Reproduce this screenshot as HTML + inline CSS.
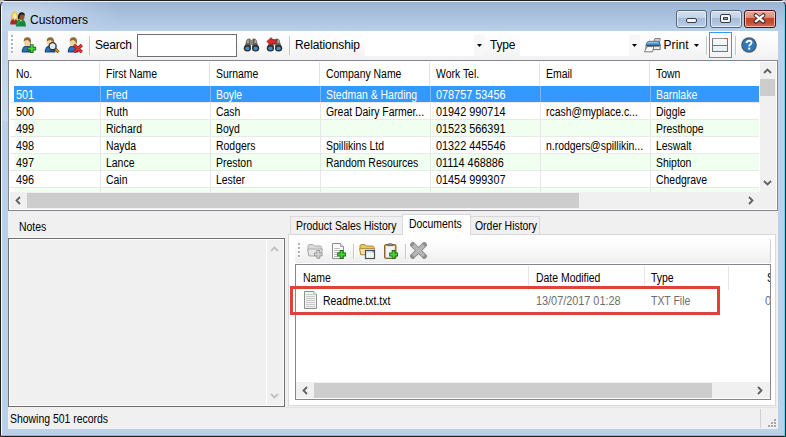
<!DOCTYPE html>
<html><head><meta charset="utf-8"><style>
html,body{margin:0;padding:0;width:786px;height:437px;overflow:hidden;background:#bcbcbc;}
.t{position:absolute;white-space:nowrap;line-height:14px;font-family:"Liberation Sans", sans-serif;}
div{font-family:"Liberation Sans", sans-serif;}
svg{display:block;}
</style></head><body>
<div style="position:relative;width:786px;height:437px;overflow:hidden">
<div style="position:absolute;left:0px;top:0px;width:786px;height:437px;background:#b9d1ea;border-radius:6px 6px 0 0;"></div><div style="position:absolute;left:0px;top:0px;width:786px;height:31px;border-radius:6px 6px 0 0;background:linear-gradient(to bottom,#98b2d2 0px,#a6bedb 12px,#b4cbe6 26px,#b9d1ea 31px);"></div><div style="position:absolute;left:0px;top:0px;width:300px;height:31px;border-radius:6px 0 0 0;background:radial-gradient(ellipse 110px 30px at 10px 14px,rgba(212,226,242,0.8),rgba(212,226,242,0));"></div><div style="position:absolute;left:1px;top:31px;width:7px;height:90px;background:linear-gradient(to bottom,#bfd3ea,#c6d8ee);"></div><div style="position:absolute;left:0px;top:0px;width:786px;height:437px;box-sizing:border-box;border:1px solid #202020;border-radius:6px 6px 0 0;"></div><div style="position:absolute;left:1px;top:1px;width:784px;height:1px;background:#e9f0f8;border-radius:5px 5px 0 0;"></div><div style="position:absolute;left:1px;top:6px;width:1px;height:430px;background:#f4f8fc;"></div><div style="position:absolute;left:784px;top:6px;width:1px;height:430px;background:#5ad8f2;"></div><div style="position:absolute;left:1px;top:435px;width:784px;height:1px;background:#3fd6f2;"></div><div style="position:absolute;left:10px;top:11px"><svg width="16" height="16" viewBox="0 0 16 16">
<path d="M1 9.6 Q0.6 0.5 4.6 0.5 Q8.4 0.5 8.1 9.6 Z" fill="#dcbc3c"/>
<path d="M2.2 7 Q2.2 1.4 4.6 1.4 Q7 1.4 6.9 7Z" fill="#f2dc78"/>
<ellipse cx="4.8" cy="5.6" rx="1.4" ry="2.6" fill="#f4e4b8"/>
<path d="M0.2 13.6 Q0 8.2 4.2 8.2 Q8.2 8.2 8.1 13.6 Z" fill="#a42c1e"/>
<path d="M3.6 8.3 L4.5 9.8 L5.5 8.3Z" fill="#f0e0c0"/>
<path d="M5.8 15.4 Q5.6 8.4 10.8 8.3 Q16 8.4 15.9 15.4 Z" fill="#16873a"/>
<path d="M7.5 14 Q8 10 11 9.6" stroke="#40b060" stroke-width="0.8" fill="none"/>
<path d="M9.6 8.4 L11 10.4 L12.4 8.4Z" fill="#e6f0e6"/>
<ellipse cx="11.8" cy="5.8" rx="2.7" ry="3.4" fill="#8a5230"/>
<path d="M8 8 Q7.6 1.3 11.6 1.3 Q15.1 1.3 14.9 5 Q13.4 3.2 11.2 3.6 Q9.6 4.2 9.4 8.4 Z" fill="#1c1c1c"/>
</svg></div><div class="t" style="left:30px;top:13.14px;font-size:12px;color:#000;letter-spacing:0px;">Customers</div><div style="position:absolute;left:676px;top:10px;width:31px;height:18px;box-sizing:border-box;border:1px solid #56667c;border-radius:3px;background:linear-gradient(to bottom,#d0deee 0%,#c4d5ea 40%,#a6bcd8 45%,#aec3dd 70%,#bdd0e6 100%);box-shadow:inset 0 0 0 1px rgba(255,255,255,0.6);"></div><div style="position:absolute;left:686px;top:18px;width:11px;height:5px;box-sizing:border-box;border:1px solid #363c46;background:#f6f6f6;border-radius:2px;"></div><div style="position:absolute;left:710px;top:10px;width:32px;height:18px;box-sizing:border-box;border:1px solid #56667c;border-radius:3px;background:linear-gradient(to bottom,#d0deee 0%,#c4d5ea 40%,#a6bcd8 45%,#aec3dd 70%,#bdd0e6 100%);box-shadow:inset 0 0 0 1px rgba(255,255,255,0.6);"></div><div style="position:absolute;left:720px;top:14px;width:11px;height:9px;box-sizing:border-box;border:1px solid #363c46;background:#f6f6f6;border-radius:2px;"></div><div style="position:absolute;left:723px;top:17px;width:5px;height:3px;box-sizing:border-box;border:1px solid #404650;background:#8ea4c2;"></div><div style="position:absolute;left:744px;top:10px;width:32px;height:18px;box-sizing:border-box;border:1px solid #4a1212;border-radius:3px;background:linear-gradient(to bottom,#eaa898 0%,#e0907c 40%,#c4462c 45%,#c44a30 70%,#d26c52 100%);box-shadow:inset 0 0 0 1px rgba(255,220,210,0.7);"></div><svg style="position:absolute;left:753px;top:13px" width="13" height="11" viewBox="0 0 13 11"><path d="M2.6 2.2 L10.4 8.6 M10.4 2.2 L2.6 8.6" stroke="#3a2a30" stroke-width="4" stroke-linecap="round"/><path d="M2.8 2.4 L10.2 8.4 M10.2 2.4 L2.8 8.4" stroke="#fbfbfb" stroke-width="2.3" stroke-linecap="round"/></svg><div style="position:absolute;left:8px;top:31px;width:770px;height:398px;background:#f0f0f0;"></div><div style="position:absolute;left:8px;top:31px;width:770px;height:29px;background:linear-gradient(to bottom,#ffffff 0%,#fbfbfc 40%,#f1f1f1 100%);"></div><div style="position:absolute;left:12px;top:36px;width:2px;height:2px;background:#fff;"></div><div style="position:absolute;left:11px;top:35px;width:2px;height:2px;background:#b2b2b2;"></div><div style="position:absolute;left:12px;top:40px;width:2px;height:2px;background:#fff;"></div><div style="position:absolute;left:11px;top:39px;width:2px;height:2px;background:#b2b2b2;"></div><div style="position:absolute;left:12px;top:44px;width:2px;height:2px;background:#fff;"></div><div style="position:absolute;left:11px;top:43px;width:2px;height:2px;background:#b2b2b2;"></div><div style="position:absolute;left:12px;top:48px;width:2px;height:2px;background:#fff;"></div><div style="position:absolute;left:11px;top:47px;width:2px;height:2px;background:#b2b2b2;"></div><div style="position:absolute;left:12px;top:52px;width:2px;height:2px;background:#fff;"></div><div style="position:absolute;left:11px;top:51px;width:2px;height:2px;background:#b2b2b2;"></div><div style="position:absolute;left:21px;top:37px"><svg width="16" height="16" viewBox="0 0 16 16">
<path d="M0.8 15.6 Q0.4 8.6 6 8.4 Q11.6 8.6 11.4 15.6 Z" fill="#174c88"/>
<path d="M2 14.5 Q2 9.8 6 9.6 Q9.5 9.8 9.8 13 Z" fill="#2f72b8"/>
<ellipse cx="6.3" cy="4.9" rx="3.5" ry="4.2" fill="#f0d49c"/>
<path d="M2.7 4.6 Q2.5 0.3 6.5 0.3 Q10.3 0.5 10 5 L9.4 7.4 Q9 3.8 6.6 2.9 Q4.2 2.8 2.7 4.6Z" fill="#8c6a3a"/>
<path d="M6.3 11.6h8.8M10.7 7.2v8.8" stroke="#1d6a14" stroke-width="3.8"/><path d="M7.2 11.6h7M10.7 8.1v7" stroke="#46d836" stroke-width="1.9"/></svg></div><div style="position:absolute;left:44px;top:37px"><svg width="16" height="16" viewBox="0 0 16 16">
<path d="M0.8 15.6 Q0.4 8.6 6 8.4 Q11.6 8.6 11.4 15.6 Z" fill="#174c88"/>
<path d="M2 14.5 Q2 9.8 6 9.6 Q9.5 9.8 9.8 13 Z" fill="#2f72b8"/>
<ellipse cx="6.3" cy="4.9" rx="3.5" ry="4.2" fill="#f0d49c"/>
<path d="M2.7 4.6 Q2.5 0.3 6.5 0.3 Q10.3 0.5 10 5 L9.4 7.4 Q9 3.8 6.6 2.9 Q4.2 2.8 2.7 4.6Z" fill="#8c6a3a"/>
<path d="M11 11.6 L14.6 15.2" stroke="#6a4a10" stroke-width="3"/><path d="M11.2 11.8 L14.4 15" stroke="#d0a040" stroke-width="1.6"/><circle cx="8.6" cy="9.2" r="3.5" fill="#dcecf8" stroke="#2c3036" stroke-width="1.3"/></svg></div><div style="position:absolute;left:67px;top:37px"><svg width="16" height="16" viewBox="0 0 16 16">
<path d="M0.8 15.6 Q0.4 8.6 6 8.4 Q11.6 8.6 11.4 15.6 Z" fill="#174c88"/>
<path d="M2 14.5 Q2 9.8 6 9.6 Q9.5 9.8 9.8 13 Z" fill="#2f72b8"/>
<ellipse cx="6.3" cy="4.9" rx="3.5" ry="4.2" fill="#f0d49c"/>
<path d="M2.7 4.6 Q2.5 0.3 6.5 0.3 Q10.3 0.5 10 5 L9.4 7.4 Q9 3.8 6.6 2.9 Q4.2 2.8 2.7 4.6Z" fill="#8c6a3a"/>
<path d="M7 8 L14.8 15.2 M14.8 8 L7 15.2" stroke="#9a1414" stroke-width="3.2"/><path d="M7.2 8.2 L14.6 15 M14.6 8.2 L7.2 15" stroke="#f03030" stroke-width="1.8"/></svg></div><div style="position:absolute;left:89px;top:36px;width:1px;height:19px;background:#c6c6c6;"></div><div style="position:absolute;left:90px;top:36px;width:1px;height:19px;background:#fff;"></div><div class="t" style="left:95px;top:38.14px;font-size:12px;color:#000;letter-spacing:-0.2px;">Search</div><div style="position:absolute;left:137px;top:34px;width:100px;height:23px;box-sizing:border-box;border:1px solid #6e6e6e;background:#fff;"></div><div style="position:absolute;left:243px;top:37px"><svg width="17" height="15" viewBox="0 0 17 15">
<path d="M1.2 11 L3.6 3 Q4.4 1.2 6.4 1.4 Q7.8 1.8 7.8 3.5 L7.9 10 Z" fill="#5c5a52"/>
<path d="M15.8 11 L13.4 3 Q12.6 1.2 10.6 1.4 Q9.2 1.8 9.2 3.5 L9.1 10 Z" fill="#5c5a52"/>
<path d="M3.4 6 L4.8 2.6 L6.2 2.6 L5.8 6.5Z" fill="#a8a49a"/>
<path d="M11 6 L11.8 2.6 L12.8 2.6 L13.8 6.2Z" fill="#a8a49a"/>
<rect x="7" y="3" width="3" height="5" fill="#8a877e"/>
<ellipse cx="4.4" cy="11.2" rx="3.6" ry="3.2" fill="#2c2c28"/><ellipse cx="4.4" cy="11.4" rx="2.2" ry="1.9" fill="#3f8cc6"/>
<ellipse cx="12.6" cy="11.2" rx="3.6" ry="3.2" fill="#2c2c28"/><ellipse cx="12.6" cy="11.4" rx="2.2" ry="1.9" fill="#3f8cc6"/>
</svg></div><div style="position:absolute;left:266px;top:37px"><svg width="17" height="15" viewBox="0 0 17 15">
<path d="M1.2 11 L3.6 3 Q4.4 1.2 6.4 1.4 Q7.8 1.8 7.8 3.5 L7.9 10 Z" fill="#5c5a52"/>
<path d="M15.8 11 L13.4 3 Q12.6 1.2 10.6 1.4 Q9.2 1.8 9.2 3.5 L9.1 10 Z" fill="#5c5a52"/>
<path d="M3.4 6 L4.8 2.6 L6.2 2.6 L5.8 6.5Z" fill="#a8a49a"/>
<path d="M11 6 L11.8 2.6 L12.8 2.6 L13.8 6.2Z" fill="#a8a49a"/>
<rect x="7" y="3" width="3" height="5" fill="#8a877e"/>
<ellipse cx="4.4" cy="11.2" rx="3.6" ry="3.2" fill="#2c2c28"/><ellipse cx="4.4" cy="11.4" rx="2.2" ry="1.9" fill="#3f8cc6"/>
<ellipse cx="12.6" cy="11.2" rx="3.6" ry="3.2" fill="#2c2c28"/><ellipse cx="12.6" cy="11.4" rx="2.2" ry="1.9" fill="#3f8cc6"/>
<path d="M0.8 4.6 L5.2 0.6 L5.4 2.8 L9.6 2.6 L9.8 6.4 L5.6 6.6 L5.8 8.8Z" fill="#e02828" stroke="#901818" stroke-width="0.7"/></svg></div><div style="position:absolute;left:289px;top:36px;width:1px;height:19px;background:#c6c6c6;"></div><div style="position:absolute;left:290px;top:36px;width:1px;height:19px;background:#fff;"></div><div class="t" style="left:295px;top:38.14px;font-size:12px;color:#000;letter-spacing:-0.1px;">Relationship</div><div style="position:absolute;left:365px;top:35px;width:120px;height:21px;background:#fff;"></div><div style="position:absolute;left:474px;top:35px;width:11px;height:21px;background:#f7f7f7;"></div><svg style="position:absolute;left:477px;top:44px" width="6" height="4" viewBox="0 0 6 4"><path d="M0 0H5L2.5 3Z" fill="#000"/></svg><div class="t" style="left:490px;top:38.14px;font-size:12px;color:#000;letter-spacing:-0.2px;">Type</div><div style="position:absolute;left:520px;top:35px;width:120px;height:21px;background:#fff;"></div><div style="position:absolute;left:629px;top:35px;width:11px;height:21px;background:#f7f7f7;"></div><svg style="position:absolute;left:632px;top:44px" width="6" height="4" viewBox="0 0 6 4"><path d="M0 0H5L2.5 3Z" fill="#000"/></svg><div style="position:absolute;left:644px;top:38px"><svg width="17" height="15" viewBox="0 0 17 15">
<path d="M9.4 4.2 L11 0.5 L16.2 0.5 L15.6 4.6Z" fill="#cfcfcf" stroke="#6a6a6a" stroke-width="0.8"/>
<path d="M2 7 L16.2 7 L16.2 11.6 L2 11.6Z" fill="#ececec" stroke="#4e4e4e" stroke-width="0.8"/>
<path d="M2 7.2 Q2.4 3.4 5.2 3.3 L14 3.3 Q16 3.5 16.2 7.2Z" fill="#4b99d9" stroke="#2d5e8e" stroke-width="0.7"/>
<path d="M3.5 5 Q8 3.9 14 4.4" stroke="#a8d4f4" stroke-width="0.9" fill="none"/>
<rect x="3" y="7.2" width="12.5" height="1.3" fill="#3a3a3a"/>
<path d="M3 8.6 L9.8 8.6 L8.6 13.8 L0.5 13.8Z" fill="#fbfbfb" stroke="#5a5a5a" stroke-width="0.8"/>
</svg></div><div class="t" style="left:663.5px;top:38.14px;font-size:12px;color:#000;letter-spacing:0.1px;">Print</div><svg style="position:absolute;left:694px;top:44px" width="6" height="4" viewBox="0 0 6 4"><path d="M0 0H5L2.5 3Z" fill="#000"/></svg><div style="position:absolute;left:706px;top:36px;width:1px;height:19px;background:#c6c6c6;"></div><div style="position:absolute;left:707px;top:36px;width:1px;height:19px;background:#fff;"></div><div style="position:absolute;left:709px;top:32px;width:23px;height:26px;box-sizing:border-box;border:1px solid #3399ff;"></div><div style="position:absolute;left:712px;top:38px;width:16px;height:14px;box-sizing:border-box;border:1px solid #6c7884;border-top-color:#8a949e;background:linear-gradient(to bottom,#f8fafb,#e8eef2);"></div><div style="position:absolute;left:713px;top:45px;width:14px;height:1px;background:#6c7884;"></div><div style="position:absolute;left:725px;top:38px;width:2px;height:1px;background:#f05030;"></div><div style="position:absolute;left:735px;top:36px;width:1px;height:19px;background:#c6c6c6;"></div><div style="position:absolute;left:736px;top:36px;width:1px;height:19px;background:#fff;"></div><div style="position:absolute;left:741px;top:37px"><svg width="16" height="16" viewBox="0 0 16 16">
<circle cx="8" cy="8" r="7.8" fill="#505a64"/>
<circle cx="8" cy="8" r="6.5" fill="#2b78c0"/>
<path d="M3 6 Q8 1 13 6 Q8 4 3 6Z" fill="#8cc0ec"/>
<path d="M5.6 6.1 Q5.8 3.7 8.1 3.7 Q10.5 3.8 10.5 5.8 Q10.4 7.2 8.9 7.9 Q8.2 8.3 8.2 9.6" stroke="#fff" stroke-width="1.8" fill="none"/>
<rect x="7.2" y="10.6" width="2" height="2" fill="#fff"/>
</svg></div><div style="position:absolute;left:8px;top:60px;width:770px;height:151px;box-sizing:border-box;border:1px solid #828790;background:#fff;"></div><div style="position:absolute;left:99px;top:62px;width:1px;height:23px;background:#e3e3e3;"></div><div style="position:absolute;left:209px;top:62px;width:1px;height:23px;background:#e3e3e3;"></div><div style="position:absolute;left:319px;top:62px;width:1px;height:23px;background:#e3e3e3;"></div><div style="position:absolute;left:429px;top:62px;width:1px;height:23px;background:#e3e3e3;"></div><div style="position:absolute;left:539px;top:62px;width:1px;height:23px;background:#e3e3e3;"></div><div style="position:absolute;left:649px;top:62px;width:1px;height:23px;background:#e3e3e3;"></div><div class="t" style="left:16px;top:66.74px;font-size:12px;color:#000;letter-spacing:0px;transform:scaleX(0.87);transform-origin:0 0;">No.</div><div class="t" style="left:106px;top:66.74px;font-size:12px;color:#000;letter-spacing:0px;transform:scaleX(0.87);transform-origin:0 0;">First Name</div><div class="t" style="left:216px;top:66.74px;font-size:12px;color:#000;letter-spacing:0px;transform:scaleX(0.87);transform-origin:0 0;">Surname</div><div class="t" style="left:326px;top:66.74px;font-size:12px;color:#000;letter-spacing:0px;transform:scaleX(0.87);transform-origin:0 0;">Company Name</div><div class="t" style="left:436px;top:66.74px;font-size:12px;color:#000;letter-spacing:0px;transform:scaleX(0.87);transform-origin:0 0;">Work Tel.</div><div class="t" style="left:546px;top:66.74px;font-size:12px;color:#000;letter-spacing:0px;transform:scaleX(0.87);transform-origin:0 0;">Email</div><div class="t" style="left:656px;top:66.74px;font-size:12px;color:#000;letter-spacing:0px;transform:scaleX(0.87);transform-origin:0 0;">Town</div><div style="position:absolute;left:14px;top:86px;width:745px;height:16px;background:#3399ff;"></div><div style="position:absolute;left:10px;top:102px;width:749px;height:1px;background:#e9e9e9;"></div><div style="position:absolute;left:100px;top:86px;width:1px;height:16px;background:#78b8ff;"></div><div style="position:absolute;left:210px;top:86px;width:1px;height:16px;background:#78b8ff;"></div><div style="position:absolute;left:320px;top:86px;width:1px;height:16px;background:#78b8ff;"></div><div style="position:absolute;left:430px;top:86px;width:1px;height:16px;background:#78b8ff;"></div><div style="position:absolute;left:540px;top:86px;width:1px;height:16px;background:#78b8ff;"></div><div style="position:absolute;left:650px;top:86px;width:1px;height:16px;background:#78b8ff;"></div><div style="position:absolute;left:14px;top:103px;width:745px;height:16px;background:#ffffff;"></div><div style="position:absolute;left:10px;top:119px;width:749px;height:1px;background:#e9e9e9;"></div><div style="position:absolute;left:100px;top:103px;width:1px;height:16px;background:#e6e6e6;"></div><div style="position:absolute;left:210px;top:103px;width:1px;height:16px;background:#e6e6e6;"></div><div style="position:absolute;left:320px;top:103px;width:1px;height:16px;background:#e6e6e6;"></div><div style="position:absolute;left:430px;top:103px;width:1px;height:16px;background:#e6e6e6;"></div><div style="position:absolute;left:540px;top:103px;width:1px;height:16px;background:#e6e6e6;"></div><div style="position:absolute;left:650px;top:103px;width:1px;height:16px;background:#e6e6e6;"></div><div style="position:absolute;left:14px;top:120px;width:745px;height:16px;background:#f0fff0;"></div><div style="position:absolute;left:10px;top:136px;width:749px;height:1px;background:#e9e9e9;"></div><div style="position:absolute;left:100px;top:120px;width:1px;height:16px;background:#e6e6e6;"></div><div style="position:absolute;left:210px;top:120px;width:1px;height:16px;background:#e6e6e6;"></div><div style="position:absolute;left:320px;top:120px;width:1px;height:16px;background:#e6e6e6;"></div><div style="position:absolute;left:430px;top:120px;width:1px;height:16px;background:#e6e6e6;"></div><div style="position:absolute;left:540px;top:120px;width:1px;height:16px;background:#e6e6e6;"></div><div style="position:absolute;left:650px;top:120px;width:1px;height:16px;background:#e6e6e6;"></div><div style="position:absolute;left:14px;top:137px;width:745px;height:16px;background:#ffffff;"></div><div style="position:absolute;left:10px;top:153px;width:749px;height:1px;background:#e9e9e9;"></div><div style="position:absolute;left:100px;top:137px;width:1px;height:16px;background:#e6e6e6;"></div><div style="position:absolute;left:210px;top:137px;width:1px;height:16px;background:#e6e6e6;"></div><div style="position:absolute;left:320px;top:137px;width:1px;height:16px;background:#e6e6e6;"></div><div style="position:absolute;left:430px;top:137px;width:1px;height:16px;background:#e6e6e6;"></div><div style="position:absolute;left:540px;top:137px;width:1px;height:16px;background:#e6e6e6;"></div><div style="position:absolute;left:650px;top:137px;width:1px;height:16px;background:#e6e6e6;"></div><div style="position:absolute;left:14px;top:154px;width:745px;height:16px;background:#f0fff0;"></div><div style="position:absolute;left:10px;top:170px;width:749px;height:1px;background:#e9e9e9;"></div><div style="position:absolute;left:100px;top:154px;width:1px;height:16px;background:#e6e6e6;"></div><div style="position:absolute;left:210px;top:154px;width:1px;height:16px;background:#e6e6e6;"></div><div style="position:absolute;left:320px;top:154px;width:1px;height:16px;background:#e6e6e6;"></div><div style="position:absolute;left:430px;top:154px;width:1px;height:16px;background:#e6e6e6;"></div><div style="position:absolute;left:540px;top:154px;width:1px;height:16px;background:#e6e6e6;"></div><div style="position:absolute;left:650px;top:154px;width:1px;height:16px;background:#e6e6e6;"></div><div style="position:absolute;left:14px;top:171px;width:745px;height:16px;background:#ffffff;"></div><div style="position:absolute;left:10px;top:187px;width:749px;height:1px;background:#e9e9e9;"></div><div style="position:absolute;left:100px;top:171px;width:1px;height:16px;background:#e6e6e6;"></div><div style="position:absolute;left:210px;top:171px;width:1px;height:16px;background:#e6e6e6;"></div><div style="position:absolute;left:320px;top:171px;width:1px;height:16px;background:#e6e6e6;"></div><div style="position:absolute;left:430px;top:171px;width:1px;height:16px;background:#e6e6e6;"></div><div style="position:absolute;left:540px;top:171px;width:1px;height:16px;background:#e6e6e6;"></div><div style="position:absolute;left:650px;top:171px;width:1px;height:16px;background:#e6e6e6;"></div><div style="position:absolute;left:14px;top:188px;width:745px;height:4px;background:#f0fff0;"></div><div style="position:absolute;left:100px;top:188px;width:1px;height:4px;background:#e6e6e6;"></div><div style="position:absolute;left:210px;top:188px;width:1px;height:4px;background:#e6e6e6;"></div><div style="position:absolute;left:320px;top:188px;width:1px;height:4px;background:#e6e6e6;"></div><div style="position:absolute;left:430px;top:188px;width:1px;height:4px;background:#e6e6e6;"></div><div style="position:absolute;left:540px;top:188px;width:1px;height:4px;background:#e6e6e6;"></div><div style="position:absolute;left:650px;top:188px;width:1px;height:4px;background:#e6e6e6;"></div><div class="t" style="left:16px;top:88.04px;font-size:12px;color:#fff;letter-spacing:0px;transform:scaleX(0.905);transform-origin:0 0;">501</div><div class="t" style="left:106px;top:88.04px;font-size:12px;color:#fff;letter-spacing:0px;transform:scaleX(0.87);transform-origin:0 0;">Fred</div><div class="t" style="left:216px;top:88.04px;font-size:12px;color:#fff;letter-spacing:0px;transform:scaleX(0.87);transform-origin:0 0;">Boyle</div><div class="t" style="left:326px;top:88.04px;font-size:12px;color:#fff;letter-spacing:0px;transform:scaleX(0.87);transform-origin:0 0;">Stedman &amp; Harding</div><div class="t" style="left:436px;top:88.04px;font-size:12px;color:#fff;letter-spacing:0px;transform:scaleX(0.905);transform-origin:0 0;">078757 53456</div><div class="t" style="left:656px;top:88.04px;font-size:12px;color:#fff;letter-spacing:0px;transform:scaleX(0.87);transform-origin:0 0;">Barnlake</div><div class="t" style="left:16px;top:105.04px;font-size:12px;color:#000;letter-spacing:0px;transform:scaleX(0.905);transform-origin:0 0;">500</div><div class="t" style="left:106px;top:105.04px;font-size:12px;color:#000;letter-spacing:0px;transform:scaleX(0.87);transform-origin:0 0;">Ruth</div><div class="t" style="left:216px;top:105.04px;font-size:12px;color:#000;letter-spacing:0px;transform:scaleX(0.87);transform-origin:0 0;">Cash</div><div class="t" style="left:326px;top:105.04px;font-size:12px;color:#000;letter-spacing:0px;transform:scaleX(0.87);transform-origin:0 0;">Great Dairy Farmer...</div><div class="t" style="left:436px;top:105.04px;font-size:12px;color:#000;letter-spacing:0px;transform:scaleX(0.905);transform-origin:0 0;">01942 990714</div><div class="t" style="left:546px;top:105.04px;font-size:12px;color:#000;letter-spacing:0px;transform:scaleX(0.87);transform-origin:0 0;">rcash@myplace.c...</div><div class="t" style="left:656px;top:105.04px;font-size:12px;color:#000;letter-spacing:0px;transform:scaleX(0.87);transform-origin:0 0;">Diggle</div><div class="t" style="left:16px;top:122.04px;font-size:12px;color:#000;letter-spacing:0px;transform:scaleX(0.905);transform-origin:0 0;">499</div><div class="t" style="left:106px;top:122.04px;font-size:12px;color:#000;letter-spacing:0px;transform:scaleX(0.87);transform-origin:0 0;">Richard</div><div class="t" style="left:216px;top:122.04px;font-size:12px;color:#000;letter-spacing:0px;transform:scaleX(0.87);transform-origin:0 0;">Boyd</div><div class="t" style="left:436px;top:122.04px;font-size:12px;color:#000;letter-spacing:0px;transform:scaleX(0.905);transform-origin:0 0;">01523 566391</div><div class="t" style="left:656px;top:122.04px;font-size:12px;color:#000;letter-spacing:0px;transform:scaleX(0.87);transform-origin:0 0;">Presthope</div><div class="t" style="left:16px;top:139.04px;font-size:12px;color:#000;letter-spacing:0px;transform:scaleX(0.905);transform-origin:0 0;">498</div><div class="t" style="left:106px;top:139.04px;font-size:12px;color:#000;letter-spacing:0px;transform:scaleX(0.87);transform-origin:0 0;">Nayda</div><div class="t" style="left:216px;top:139.04px;font-size:12px;color:#000;letter-spacing:0px;transform:scaleX(0.87);transform-origin:0 0;">Rodgers</div><div class="t" style="left:326px;top:139.04px;font-size:12px;color:#000;letter-spacing:0px;transform:scaleX(0.87);transform-origin:0 0;">Spillikins Ltd</div><div class="t" style="left:436px;top:139.04px;font-size:12px;color:#000;letter-spacing:0px;transform:scaleX(0.905);transform-origin:0 0;">01322 445546</div><div class="t" style="left:546px;top:139.04px;font-size:12px;color:#000;letter-spacing:0px;transform:scaleX(0.87);transform-origin:0 0;">n.rodgers@spillikin...</div><div class="t" style="left:656px;top:139.04px;font-size:12px;color:#000;letter-spacing:0px;transform:scaleX(0.87);transform-origin:0 0;">Leswalt</div><div class="t" style="left:16px;top:156.04px;font-size:12px;color:#000;letter-spacing:0px;transform:scaleX(0.905);transform-origin:0 0;">497</div><div class="t" style="left:106px;top:156.04px;font-size:12px;color:#000;letter-spacing:0px;transform:scaleX(0.87);transform-origin:0 0;">Lance</div><div class="t" style="left:216px;top:156.04px;font-size:12px;color:#000;letter-spacing:0px;transform:scaleX(0.87);transform-origin:0 0;">Preston</div><div class="t" style="left:326px;top:156.04px;font-size:12px;color:#000;letter-spacing:0px;transform:scaleX(0.87);transform-origin:0 0;">Random Resources</div><div class="t" style="left:436px;top:156.04px;font-size:12px;color:#000;letter-spacing:0px;transform:scaleX(0.905);transform-origin:0 0;">01114 468886</div><div class="t" style="left:656px;top:156.04px;font-size:12px;color:#000;letter-spacing:0px;transform:scaleX(0.87);transform-origin:0 0;">Shipton</div><div class="t" style="left:16px;top:173.04px;font-size:12px;color:#000;letter-spacing:0px;transform:scaleX(0.905);transform-origin:0 0;">496</div><div class="t" style="left:106px;top:173.04px;font-size:12px;color:#000;letter-spacing:0px;transform:scaleX(0.87);transform-origin:0 0;">Cain</div><div class="t" style="left:216px;top:173.04px;font-size:12px;color:#000;letter-spacing:0px;transform:scaleX(0.87);transform-origin:0 0;">Lester</div><div class="t" style="left:436px;top:173.04px;font-size:12px;color:#000;letter-spacing:0px;transform:scaleX(0.905);transform-origin:0 0;">01454 999307</div><div class="t" style="left:656px;top:173.04px;font-size:12px;color:#000;letter-spacing:0px;transform:scaleX(0.87);transform-origin:0 0;">Chedgrave</div><div style="position:absolute;left:760px;top:62px;width:16px;height:130px;background:#f0f0f0;"></div><div style="position:absolute;left:760px;top:79px;width:15px;height:17px;background:#cdcdcd;"></div><div style="position:absolute;left:763px;top:68px"><svg width="9" height="6" viewBox="0 0 9 6"><path d="M1 5 L4.5 1.5 L8 5" stroke="#606060" stroke-width="1.8" fill="none"/></svg></div><div style="position:absolute;left:763px;top:180px"><svg width="9" height="6" viewBox="0 0 9 6"><path d="M1 1 L4.5 4.5 L8 1" stroke="#606060" stroke-width="1.8" fill="none"/></svg></div><div style="position:absolute;left:10px;top:192px;width:766px;height:17px;background:#f0f0f0;"></div><div style="position:absolute;left:27px;top:193px;width:552px;height:15px;background:#cdcdcd;"></div><div style="position:absolute;left:15px;top:196px"><svg width="6" height="9" viewBox="0 0 6 9"><path d="M5 1 L1.5 4.5 L5 8" stroke="#606060" stroke-width="1.8" fill="none"/></svg></div><div style="position:absolute;left:748px;top:196px"><svg width="6" height="9" viewBox="0 0 6 9"><path d="M1 1 L4.5 4.5 L1 8" stroke="#606060" stroke-width="1.8" fill="none"/></svg></div><div class="t" style="left:19px;top:220.04px;font-size:12px;color:#000;letter-spacing:0px;transform:scaleX(0.87);transform-origin:0 0;">Notes</div><div style="position:absolute;left:8px;top:237px;width:277px;height:1px;background:#f7f7f7;"></div><div style="position:absolute;left:8px;top:238px;width:277px;height:169px;box-sizing:border-box;border:1px solid #6e6e6e;background:#f0f0f0;"></div><div style="position:absolute;left:9px;top:239px;width:275px;height:167px;box-sizing:border-box;border:1px solid #fff;"></div><div style="position:absolute;left:266px;top:240px;width:1px;height:165px;background:#fff;"></div><div style="position:absolute;left:270px;top:246px"><svg width="9" height="6" viewBox="0 0 9 6"><path d="M1 5 L4.5 1.5 L8 5" stroke="#c0c0c0" stroke-width="1.8" fill="none"/></svg></div><div style="position:absolute;left:270px;top:393px"><svg width="9" height="6" viewBox="0 0 9 6"><path d="M1 1 L4.5 4.5 L8 1" stroke="#c0c0c0" stroke-width="1.8" fill="none"/></svg></div><div style="position:absolute;left:288px;top:234px;width:488px;height:172px;box-sizing:border-box;border:1px solid #d9d9d9;background:#fff;"></div><div style="position:absolute;left:290px;top:216px;width:113px;height:18px;box-sizing:border-box;border:1px solid #d9d9d9;border-bottom:none;background:#f0f0f0;"></div><div class="t" style="left:296px;top:218.84px;font-size:12px;color:#000;letter-spacing:0px;transform:scaleX(0.87);transform-origin:0 0;">Product Sales History</div><div style="position:absolute;left:470px;top:216px;width:70px;height:18px;box-sizing:border-box;border:1px solid #d9d9d9;border-bottom:none;background:#f0f0f0;"></div><div class="t" style="left:475px;top:218.84px;font-size:12px;color:#000;letter-spacing:0px;transform:scaleX(0.87);transform-origin:0 0;">Order History</div><div style="position:absolute;left:402px;top:214px;width:69px;height:21px;box-sizing:border-box;border:1px solid #d9d9d9;border-bottom:none;background:#fff;"></div><div class="t" style="left:409px;top:216.84px;font-size:12px;color:#000;letter-spacing:0px;transform:scaleX(0.87);transform-origin:0 0;">Documents</div><div style="position:absolute;left:295px;top:239px;width:476px;height:24px;border-radius:2px;background:linear-gradient(to bottom,#ffffff 0%,#f8f8f8 50%,#eeeeee 100%);box-shadow:inset -1px 0 0 #d0d0d0;"></div><div style="position:absolute;left:299px;top:244px;width:2px;height:2px;background:#fff;"></div><div style="position:absolute;left:298px;top:243px;width:2px;height:2px;background:#b2b2b2;"></div><div style="position:absolute;left:299px;top:248px;width:2px;height:2px;background:#fff;"></div><div style="position:absolute;left:298px;top:247px;width:2px;height:2px;background:#b2b2b2;"></div><div style="position:absolute;left:299px;top:252px;width:2px;height:2px;background:#fff;"></div><div style="position:absolute;left:298px;top:251px;width:2px;height:2px;background:#b2b2b2;"></div><div style="position:absolute;left:299px;top:256px;width:2px;height:2px;background:#fff;"></div><div style="position:absolute;left:298px;top:255px;width:2px;height:2px;background:#b2b2b2;"></div><div style="position:absolute;left:307px;top:243px"><svg width="17" height="17" viewBox="0 0 17 17"><path d="M1 3.5 Q1 1.5 3 1.5 L6 1.5 L7.5 3 L13 3 Q14.5 3 14.5 4.5 L14.5 12.5 L1.5 12.5Z" fill="#dadada" stroke="#a4a4a4" stroke-width="0.9"/><path d="M0.5 6 L15.5 6 L14 13 L2 13Z" fill="#e6e6e6" stroke="#a8a8a8" stroke-width="0.9"/><path d="M7 11.4h8.6M11.3 7.1v8.6" stroke="#9c9c9c" stroke-width="3.8"/><path d="M7.9 11.4h6.8M11.3 8v6.8" stroke="#d4d4d4" stroke-width="1.9"/></svg></div><div style="position:absolute;left:331px;top:243px"><svg width="16" height="16" viewBox="0 0 16 16"><path d="M1.5 0.5 L9.5 0.5 L12.5 3.5 L12.5 15.5 L1.5 15.5Z" fill="#fbfbfb" stroke="#8e8e8e"/><path d="M9.5 0.5 L9.5 3.5 L12.5 3.5" fill="#dde8f0" stroke="#8e8e8e" stroke-width="0.8"/><path d="M3.5 5.5h5M3 7.5h8M3 9.5h7M3 11.5h4M3 13.5h4" stroke="#b8b8b8"/><path d="M6.2 11.5h8.8M10.6 7.1v8.8" stroke="#1c6e14" stroke-width="3.8"/><path d="M7.1 11.5h7M10.6 8v7" stroke="#46d836" stroke-width="1.9"/></svg></div><div style="position:absolute;left:353px;top:244px;width:1px;height:15px;background:#c6c6c6;"></div><div style="position:absolute;left:354px;top:244px;width:1px;height:15px;background:#fff;"></div><div style="position:absolute;left:359px;top:243px"><svg width="17" height="17" viewBox="0 0 17 17"><path d="M1 3 Q1 1.5 2.5 1.5 L6 1.5 L7.5 3 L13.5 3 Q15 3 15 4.5 L15 11.5 L1.5 11.5Z" fill="#e7c66a" stroke="#a8842c" stroke-width="0.9"/><path d="M0.5 5.5 L15.5 5.5 L14 11.8 L2 11.8Z" fill="#f8e2a0" stroke="#b08c34" stroke-width="0.9"/><rect x="6.5" y="7.5" width="9" height="8" fill="#f4f6f8" stroke="#46505a" stroke-width="1.2"/><rect x="7.1" y="8.1" width="7.8" height="1.4" fill="#c8d4e0"/><rect x="13.6" y="8" width="1.4" height="1.2" fill="#e05030"/></svg></div><div style="position:absolute;left:383px;top:243px"><svg width="16" height="16" viewBox="0 0 16 16"><rect x="1.5" y="1.5" width="11.5" height="14" rx="1.2" fill="#c89a48" stroke="#7c5c22" stroke-width="0.9"/><rect x="2.8" y="3" width="8.9" height="11.4" fill="#f2f4f6"/><path d="M4.5 2.6 Q4.5 0.6 7.2 0.6 Q10 0.6 10 2.6Z" fill="#a0a4a8" stroke="#50545a" stroke-width="0.8"/><path d="M6.2 11.5h8.8M10.6 7.1v8.8" stroke="#1c6e14" stroke-width="3.8"/><path d="M7.1 11.5h7M10.6 8v7" stroke="#46d836" stroke-width="1.9"/></svg></div><div style="position:absolute;left:405px;top:244px;width:1px;height:15px;background:#c6c6c6;"></div><div style="position:absolute;left:406px;top:244px;width:1px;height:15px;background:#fff;"></div><div style="position:absolute;left:410px;top:242px"><svg width="17" height="17" viewBox="0 0 17 17"><path d="M2.8 2.8 L14.2 14.2 M14.2 2.8 L2.8 14.2" stroke="#8e8e8e" stroke-width="5.2" stroke-linecap="square"/><path d="M3.2 3.2 L13.8 13.8 M13.8 3.2 L3.2 13.8" stroke="#b6b6b6" stroke-width="3.4"/></svg></div><div style="position:absolute;left:295px;top:264px;width:476px;height:136px;box-sizing:border-box;border:1px solid #828790;background:#fff;"></div><div style="position:absolute;left:528px;top:266px;width:1px;height:24px;background:#e5e5e5;"></div><div style="position:absolute;left:644px;top:266px;width:1px;height:24px;background:#e5e5e5;"></div><div style="position:absolute;left:728px;top:266px;width:1px;height:24px;background:#e5e5e5;"></div><div class="t" style="left:303px;top:270.84px;font-size:12px;color:#000;letter-spacing:0px;transform:scaleX(0.87);transform-origin:0 0;">Name</div><div class="t" style="left:535.5px;top:270.84px;font-size:12px;color:#000;letter-spacing:0px;transform:scaleX(0.87);transform-origin:0 0;">Date Modified</div><div class="t" style="left:651px;top:270.84px;font-size:12px;color:#000;letter-spacing:0px;transform:scaleX(0.87);transform-origin:0 0;">Type</div><div style="position:absolute;left:767px;top:271px;width:3px;height:14px;overflow:hidden"><div class="t" style="left:0;top:0;font-size:12px;transform:scaleX(0.87);transform-origin:0 0">S</div></div><div style="position:absolute;left:304px;top:291px"><svg width="14" height="19" viewBox="0 0 14 19"><path d="M0.5 0.5 L9.8 0.5 L12.5 3.2 L12.5 17.5 L0.5 17.5Z" fill="#f2f2f2" stroke="#8e8e8e"/><path d="M9.8 0.5 L9.8 3.2 L12.5 3.2" fill="#fff" stroke="#9a9a9a" stroke-width="0.8"/><path d="M2 3.5h7M2 5.5h9M2 7.5h9M2 9.5h9M2 11.5h9M2 13.5h9M2 15.5h9" stroke="#c8c8c8"/></svg></div><div class="t" style="left:322.8px;top:293.84px;font-size:12px;color:#000;letter-spacing:0px;transform:scaleX(0.87);transform-origin:0 0;">Readme.txt.txt</div><div class="t" style="left:535.5px;top:293.84px;font-size:12px;color:#6d6d6d;letter-spacing:0px;transform:scaleX(0.905);transform-origin:0 0;">13/07/2017 01:28</div><div class="t" style="left:651px;top:293.84px;font-size:12px;color:#6d6d6d;letter-spacing:0px;transform:scaleX(0.87);transform-origin:0 0;">TXT File</div><div style="position:absolute;left:764.5px;top:294px;width:5.5px;height:14px;overflow:hidden"><div class="t" style="left:0;top:0;font-size:12px;color:#6d6d6d;transform:scaleX(0.93);transform-origin:0 0">0</div></div><div style="position:absolute;left:296px;top:382px;width:474px;height:16px;background:#f0f0f0;"></div><div style="position:absolute;left:314px;top:383px;width:398px;height:15px;background:#cdcdcd;"></div><div style="position:absolute;left:302px;top:386px"><svg width="6" height="9" viewBox="0 0 6 9"><path d="M5 1 L1.5 4.5 L5 8" stroke="#606060" stroke-width="1.8" fill="none"/></svg></div><div style="position:absolute;left:757px;top:386px"><svg width="6" height="9" viewBox="0 0 6 9"><path d="M1 1 L4.5 4.5 L1 8" stroke="#606060" stroke-width="1.8" fill="none"/></svg></div><div style="position:absolute;left:290px;top:286px;width:430px;height:29px;box-sizing:border-box;border:3px solid #e0413a;"></div><div class="t" style="left:10px;top:412.04px;font-size:12px;color:#000;letter-spacing:0px;transform:scaleX(0.87);transform-origin:0 0;">Showing 501 records</div><div style="position:absolute;left:285px;top:407px;width:492px;height:1px;background:#e2e2e2;"></div><div style="position:absolute;left:760px;top:409px;width:1px;height:19px;background:#d0d0d0;"></div><div style="position:absolute;left:774px;top:419px;width:2px;height:2px;background:#a4a4a4;"></div><div style="position:absolute;left:771px;top:422px;width:2px;height:2px;background:#a4a4a4;"></div><div style="position:absolute;left:774px;top:422px;width:2px;height:2px;background:#a4a4a4;"></div><div style="position:absolute;left:768px;top:425px;width:2px;height:2px;background:#a4a4a4;"></div><div style="position:absolute;left:771px;top:425px;width:2px;height:2px;background:#a4a4a4;"></div><div style="position:absolute;left:774px;top:425px;width:2px;height:2px;background:#a4a4a4;"></div>
</div></body></html>
